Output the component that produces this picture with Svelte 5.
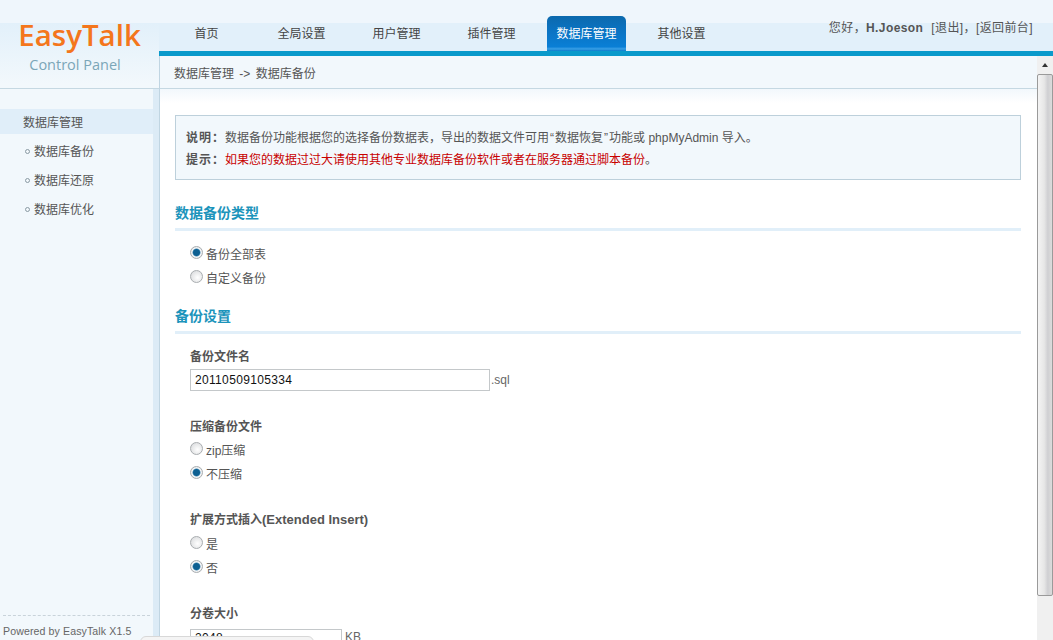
<script>
	const nav = ['首页', '全局设置', '用户管理', '插件管理', '数据库管理', '其他设置'];
	const side = ['数据库备份', '数据库还原', '数据库优化'];
</script>

<div class="page">
	<header>
		<div class="logo">
			<div class="name">EasyTalk</div>
			<div class="sub">Control Panel</div>
		</div>
		<div class="head-right">
			<ul class="nav">
				{#each nav as item, i}
					<li><a href="#top" class:active={i === 4}>{item}</a></li>
				{/each}
			</ul>
			<div class="user">您好，<b>H.Joeson</b>[退出]，[返回前台]</div>
		</div>
	</header>

	<div class="body">
		<aside>
			<div class="side-title">数据库管理</div>
			<ul class="side-list">
				{#each side as item}
					<li><i></i>{item}</li>
				{/each}
			</ul>
			<div class="powered">Powered by EasyTalk X1.5</div>
		</aside>

		<main>
			<div class="scroll-area">
				<div class="crumb">数据库管理 -&gt; 数据库备份</div>
				<div class="content">
					<div class="notice">
						<p><b>说明：</b>数据备份功能根据您的选择备份数据表，导出的数据文件可用<span class="q">“</span>数据恢复<span class="q">”</span>功能或 phpMyAdmin 导入。</p>
						<p><b>提示：</b><span class="red">如果您的数据过过大请使用其他专业数据库备份软件或者在服务器通过脚本备份</span>。</p>
					</div>

					<h2>数据备份类型</h2>
					<div class="group first">
						<label><input type="radio" name="type" checked />备份全部表</label>
						<label><input type="radio" name="type" />自定义备份</label>
					</div>

					<h2 class="second">备份设置</h2>
					<div class="field file">
						<h3>备份文件名</h3>
						<div class="line"><input class="text wide" type="text" value="20110509105334" /><span>.sql</span></div>
					</div>
					<div class="field zip">
						<h3>压缩备份文件</h3>
						<label><input type="radio" name="zip" />zip压缩</label>
						<label><input type="radio" name="zip" checked />不压缩</label>
					</div>
					<div class="field ext">
						<h3>扩展方式插入<span class="latin">(Extended Insert)</span></h3>
						<label><input type="radio" name="ext" />是</label>
						<label><input type="radio" name="ext" checked />否</label>
					</div>
					<div class="field size">
						<h3>分卷大小</h3>
						<div class="line"><input class="text small" type="text" value="2048" /><span class="kb">KB</span></div>
					</div>
				</div>
			</div>
			<div class="scrollbar">
				<div class="arrow"></div>
				<div class="thumb"></div>
			</div>
		</main>
	</div>
	<div class="status"></div>
</div>

<style>
	:global(body) {
		margin: 0;
		background: #fff;
	}

	.page {
		position: relative;
		height: 640px;
		overflow: hidden;
		font: 12px/20px 'Liberation Sans', 'Noto Sans CJK SC', sans-serif;
		color: #555;
	}

	header {
		display: flex;
		height: 88px;
		background: linear-gradient(#eff6fc 0 23px, #e2f0fa 23px 51px, #f2f8fc 51px);
		border-bottom: 1px solid #c5d8e2;
	}

	.logo {
		width: 159px;
		flex: none;
		background: linear-gradient(#eff6fc 0 23px, #e2f0fa 23px, #f2f8fc 84px);
		box-sizing: border-box;
		text-align: center;
		padding-top: 17px;
	}

	.name {
		font: 600 29.5px/36px 'Open Sans', sans-serif;
		color: #f4761c;
	}

	.sub {
		font: 14.5px/20px 'Open Sans', sans-serif;
		color: #7ba6b8;
		margin-top: 2px;
		padding-right: 9px;
	}

	.head-right {
		position: relative;
		flex: 1;
		min-width: 0;
		height: 51px;
		border-bottom: 5px solid #0a9acb;
	}

	.nav {
		display: flex;
		list-style: none;
		margin: 0;
		padding: 16px 0 0;
	}

	.nav li {
		width: 95px;
		display: flex;
		justify-content: center;
	}

	.nav a {
		width: 79px;
		height: 35px;
		line-height: 37px;
		text-align: center;
		color: #444;
		text-decoration: none;
		border-radius: 5px 5px 0 0;
	}

	.nav a.active {
		color: #fff;
		background: linear-gradient(#0c69ad, #0a74c4 45%, #0a7fd6 88%, #3a9fe6 94%, #0a7ccb);
	}

	.user {
		position: absolute;
		right: 20px;
		top: 18px;
		white-space: nowrap;
		color: #555;
		letter-spacing: 0.4px;
	}

	.user b {
		margin-right: 8px;
	}

	.body {
		display: flex;
		height: 551px;
	}

	aside {
		position: relative;
		width: 159px;
		flex: none;
		background: #f2f8fc;
		padding-top: 20px;
		box-sizing: border-box;
		border-right: 6px solid #dcebf6;
	}

	.side-title {
		height: 25px;
		line-height: 28px;
		background: #e0eef9;
		padding-left: 23px;
	}

	.side-list {
		list-style: none;
		margin: 3px 0 0;
		padding: 0 0 0 25px;
	}

	.side-list li {
		display: flex;
		align-items: center;
		height: 29px;
	}

	.side-list i {
		width: 3px;
		height: 3px;
		margin-right: 4px;
		border: 1px solid #8a9aa3;
		border-radius: 50%;
	}

	.powered {
		position: absolute;
		left: 3px;
		right: 3px;
		bottom: 0;
		height: 24px;
		border-top: 1px dashed #c9d3da;
		font: 10.6px/30px 'Liberation Sans', sans-serif;
		color: #666;
		letter-spacing: 0.1px;
	}

	main {
		flex: 1;
		display: flex;
		min-width: 0;
		margin-top: -33px;
		border-left: 1px solid #c0d5e2;
	}

	.scroll-area {
		flex: 1;
		min-width: 0;
		overflow: hidden;
	}

	.crumb {
		height: 33px;
		line-height: 36px;
		padding-left: 14px;
		background: #f2f8fc;
		border-bottom: 1px solid #c5d8e2;
		box-sizing: border-box;
		word-spacing: 2px;
	}

	.content {
		padding: 26px 16px 0 15px;
		background: linear-gradient(#f2f8fc, #fff 14px) top / 100% 14px no-repeat;
	}

	.notice {
		height: 65px;
		box-sizing: border-box;
		border: 1px solid #bdd0db;
		background: #f2f8fc;
		padding: 11px 10px 0;
	}

	.notice p {
		margin: 0;
		line-height: 22px;
	}

	.notice b {
		letter-spacing: 1px;
	}

	.q {
		margin: 0 1px;
	}

	.red {
		color: #c80000;
	}

	h2 {
		margin: 21px 0 0;
		font-size: 14px;
		line-height: 24px;
		height: 27px;
		color: #1c94bb;
		border-bottom: 3px solid #e1eff9;
		font-weight: 700;
	}

	h2.second {
		margin-top: 12px;
		height: 28px;
		line-height: 26px;
	}

	h3 {
		margin: 0;
		font-size: 12px;
		line-height: 22px;
		color: #555;
		font-weight: 700;
	}

	.latin {
		font-size: 13px;
	}

	.group {
		padding-left: 15px;
	}

	.group.first {
		padding-top: 12px;
	}

	label {
		display: flex;
		align-items: center;
		height: 24px;
	}

	input[type='radio'] {
		appearance: none;
		width: 11px;
		height: 11px;
		margin: 0 3px 5px 0;
		border: 1px solid #a9adb0;
		border-radius: 50%;
		background: radial-gradient(circle at 60% 60%, #fff, #d4d6d8);
		box-sizing: content-box;
	}

	input[type='radio']:checked {
		background: radial-gradient(circle, #0d5f91 0 3px, #4c8fb6 3.6px, #f5f6f7 4.4px, #d8dadc);
	}

	.field {
		padding-left: 15px;
	}

	.field.file {
		padding-top: 12px;
	}

	.field.zip {
		padding-top: 25px;
	}

	.field.zip h3 {
		margin-bottom: 1px;
	}

	.field.ext {
		padding-top: 22px;
	}

	.field.ext h3 {
		margin-bottom: 2px;
	}

	.field.size {
		padding-top: 22px;
	}

	.line {
		display: flex;
		align-items: center;
		margin-top: 1px;
	}

	.size .line {
		margin-top: 2px;
	}

	.line span {
		margin-left: 1px;
		color: #666;
	}

	.line .kb {
		margin: 0 0 6px 3px;
	}

	.text {
		height: 22px;
		box-sizing: border-box;
		border: 1px solid #c4c8ca;
		padding: 0 4px;
		font: 12px 'Liberation Sans', sans-serif;
		letter-spacing: 0.33px;
		color: #111;
		background: #fff;
		outline: none;
	}

	.small {
		width: 152px;
		padding-bottom: 5px;
	}

	.wide {
		width: 300px;
	}

	.scrollbar {
		width: 16px;
		flex: none;
		background: #f0f0f0;
		position: relative;
	}

	.arrow {
		position: absolute;
		left: 5px;
		top: 7px;
		border: 3px solid transparent;
		border-top: 0;
		border-bottom: 4px solid #333;
	}

	.thumb {
		position: absolute;
		top: 18px;
		left: 0;
		right: 0;
		height: 522px;
		box-sizing: border-box;
		border: 1px solid #9a9a9a;
		border-radius: 2px;
		background: linear-gradient(90deg, #f4f4f4, #e6e6e6 45%, #cfcfd2 70%, #dcdcdc);
	}

	.status {
		position: absolute;
		left: 140px;
		bottom: -8px;
		width: 172px;
		height: 10px;
		background: #f4f4f4;
		border: 1px solid #d8d8d8;
		border-radius: 6px;
	}
</style>
